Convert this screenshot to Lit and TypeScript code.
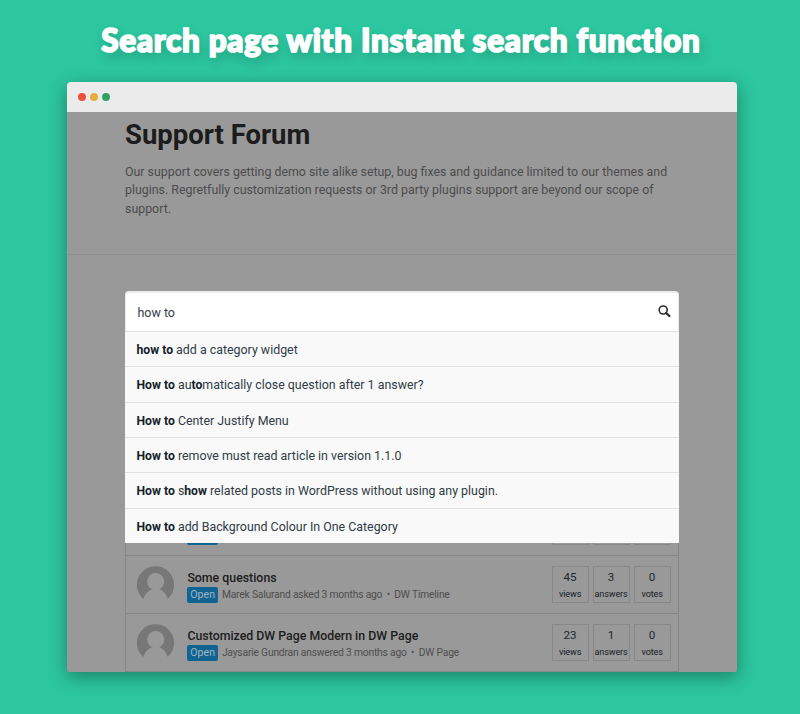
import { LitElement, html, css } from "lit";
import { customElement, property } from "lit/decorators.js";

interface Question {
  title: string;
  meta: string;
  category: string;
  stats: [string, string][];
}

const QUESTIONS: Question[] = [
  { title: "", meta: "", category: "", stats: [["", ""], ["", ""], ["", ""]] },
  {
    title: "Some questions",
    meta: "Marek Salurand asked 3 months ago",
    category: "DW Timeline",
    stats: [["45", "views"], ["3", "answers"], ["0", "votes"]],
  },
  {
    title: "Customized DW Page Modern in DW Page",
    meta: "Jaysarie Gundran answered 3 months ago",
    category: "DW Page",
    stats: [["23", "views"], ["1", "answers"], ["0", "votes"]],
  },
];

// Odd entries of each suggestion are the highlighted matches.
const SUGGESTIONS: string[][] = [
  ["", "how to", " add a category widget"],
  ["", "How to", " au", "to", "matically close question after 1 answer?"],
  ["", "How to", " Center Justify Menu"],
  ["", "How to", " remove must read article in version 1.1.0"],
  ["", "How to", " s", "how", " related posts in WordPress without using any plugin."],
  ["", "How to", " add Background Colour In One Category"],
];

@customElement("question-row")
class QuestionRow extends LitElement {
  @property({ attribute: false }) question!: Question;

  static styles = css`
    :host {
      box-sizing: border-box;
      display: flex;
      height: 58px;
      border-top: 1px solid #868686;
      padding: 10px 7.4px 0 11px;
    }
    .avatar { width: 38px; height: 38px; flex: none; }
    .body { flex: 1; padding: 4px 0 0 12.4px; white-space: nowrap; }
    .title {
      height: 17px;
      font-size: 12.35px;
      line-height: 16px;
      font-weight: 500;
      color: #1c1c1c;
    }
    .info {
      display: flex;
      align-items: center;
      height: 16px;
      font-size: 10.3px;
      letter-spacing: -0.2px;
      line-height: 16px;
      color: #4e4e4e;
    }
    .badge {
      width: 30.5px;
      height: 16px;
      line-height: 16px;
      font-size: 10.6px;
      letter-spacing: 0;
      border-radius: 2px;
      background: #116492;
      color: #a2b4bf;
      text-align: center;
      margin-right: 4px;
    }
    .dot { width: 12px; text-align: center; }
    .stats { display: flex; gap: 4px; }
    .stat {
      box-sizing: border-box;
      width: 37px;
      height: 37px;
      border: 1px solid #888;
      text-align: center;
      color: #20282d;
    }
    .count { height: 19px; font-size: 11.6px; line-height: 21px; }
    .label { font-size: 9px; letter-spacing: -0.1px; line-height: 17px; white-space: nowrap; color: #182025; }
  `;

  render() {
    const q = this.question;
    return html`
      <svg class="avatar" viewBox="0 0 38 38">
        <circle cx="18.5" cy="18.8" r="18.6" fill="#777" />
        <circle cx="18.7" cy="15.5" r="8.5" fill="#999" />
        <path d="M5 38L6.2 33.5C8.5 26.5 13 22.5 18.7 22.5C24.4 22.5 28.8 26.5 31 33.5L32.5 38Z" fill="#999" />
      </svg>
      <div class="body">
        <div class="title">${q.title}</div>
        <div class="info">
          <span class="badge">${q.title ? "Open" : ""}</span>
          ${q.meta
            ? html`<span>${q.meta}</span><span class="dot">•</span><span>${q.category}</span>`
            : ""}
        </div>
      </div>
      <div class="stats">
        ${q.stats.map(
          ([n, label]) => html`<div class="stat">
            <div class="count">${n}</div>
            <div class="label">${label}</div>
          </div>`
        )}
      </div>
    `;
  }
}

@customElement("instant-search")
class InstantSearch extends LitElement {
  static styles = css`
    :host { display: block; position: relative; height: 41px; z-index: 1; }
    .field {
      box-sizing: border-box;
      display: flex;
      align-items: center;
      justify-content: space-between;
      height: 41px;
      padding: 1px 7px 0 11.4px;
      background: #fff;
      border: 1px solid #ebebeb;
      border-top-width: 2px;
      border-radius: 4px 4px 0 0;
      font-size: 12.5px;
      color: #34404a;
    }
    .icon { width: 13px; height: 13px; margin-top: -3px; }
    .menu { position: absolute; top: 40px; left: 0; right: 0; background: #f9f9f9; }
    .item {
      box-sizing: border-box;
      height: 35.33px;
      border-top: 1px solid #e2e2e2;
      padding-left: 11.5px;
      font-size: 12.4px;
      line-height: 35px;
      color: #303c46;
      white-space: pre;
    }
    b { font-weight: 700; font-size: 12.2px; color: #15222b; }
  `;

  render() {
    return html`
      <div class="field">
        <span>how to</span>
        <svg class="icon" viewBox="0 0 13 13" fill="none" stroke="#2b2b2b">
          <circle cx="5.2" cy="5" r="4" stroke-width="1.6" />
          <path d="M8.2 8L11.4 11" stroke-width="2.3" stroke-linecap="round" />
        </svg>
      </div>
      <div class="menu">
        ${SUGGESTIONS.map(
          (parts) => html`<div class="item">${parts.map((p, i) => (i % 2 ? html`<b>${p}</b>` : p))}</div>`
        )}
      </div>
    `;
  }
}

@customElement("app-root")
class AppRoot extends LitElement {
  static styles = css`
    :host {
      display: block;
      box-sizing: border-box;
      height: 714px;
      padding-top: 15px;
      overflow: hidden;
      background: #2cc69f;
      font-family: Roboto, "Liberation Sans", sans-serif;
    }
    .headline {
      margin: 0;
      height: 67px;
      padding-left: 2px;
      font: 900 31.5px/50px "Lato Black", Lato, sans-serif;
      letter-spacing: 0.7px;
      -webkit-text-stroke: 1.7px #fff;
      text-align: center;
      white-space: nowrap;
      color: #fff;
      text-shadow: 2px 6px 12px rgba(0, 0, 0, 0.22);
    }
    .window {
      width: 670px;
      height: 590px;
      margin-left: 67px;
      border-radius: 4px 4px 2px 2px;
      background: #999;
      box-shadow: 0 5px 18px rgba(0, 0, 0, 0.35);
    }
    .bar {
      display: flex;
      align-items: center;
      gap: 4px;
      height: 30px;
      padding-left: 11px;
      box-sizing: border-box;
      background: #ebebeb;
      border-radius: 4px 4px 0 0;
    }
    .light { width: 8px; height: 8px; border-radius: 50%; }
    .red { background: #ec4f3e; }
    .amber { background: #e8ad3c; }
    .green { background: #34a266; }
    .intro {
      box-sizing: border-box;
      height: 143px;
      padding: 4px 58px 0;
      border-bottom: 1px solid #8f8f8f;
    }
    .name { margin: 0; font-size: 27.5px; line-height: 38px; font-weight: 700; color: #1c1c1c; }
    .about {
      margin: 9px 0 0;
      font-size: 12.38px;
      line-height: 18.4px;
      color: #4c4c4c;
      white-space: nowrap;
    }
    .forum { height: 417px; padding: 36px 58px 0; box-sizing: border-box; overflow: hidden; }
    .list { margin-top: 165px; border: solid #868686; border-width: 0 1px 1px; }
  `;

  render() {
    return html`
      <h1 class="headline">Search page with Instant search function</h1>
      <div class="window">
        <div class="bar">
          <span class="light red"></span>
          <span class="light amber"></span>
          <span class="light green"></span>
        </div>
        <div class="intro">
          <h2 class="name">Support Forum</h2>
          <p class="about">
            Our support covers getting demo site alike setup, bug fixes and guidance limited to our themes and<br />
            plugins. Regretfully customization requests or 3rd party plugins support are beyond our scope of<br />
            support.
          </p>
        </div>
        <div class="forum">
          <instant-search></instant-search>
          <div class="list">
            ${QUESTIONS.map((q) => html`<question-row .question=${q}></question-row>`)}
          </div>
        </div>
      </div>
    `;
  }
}
